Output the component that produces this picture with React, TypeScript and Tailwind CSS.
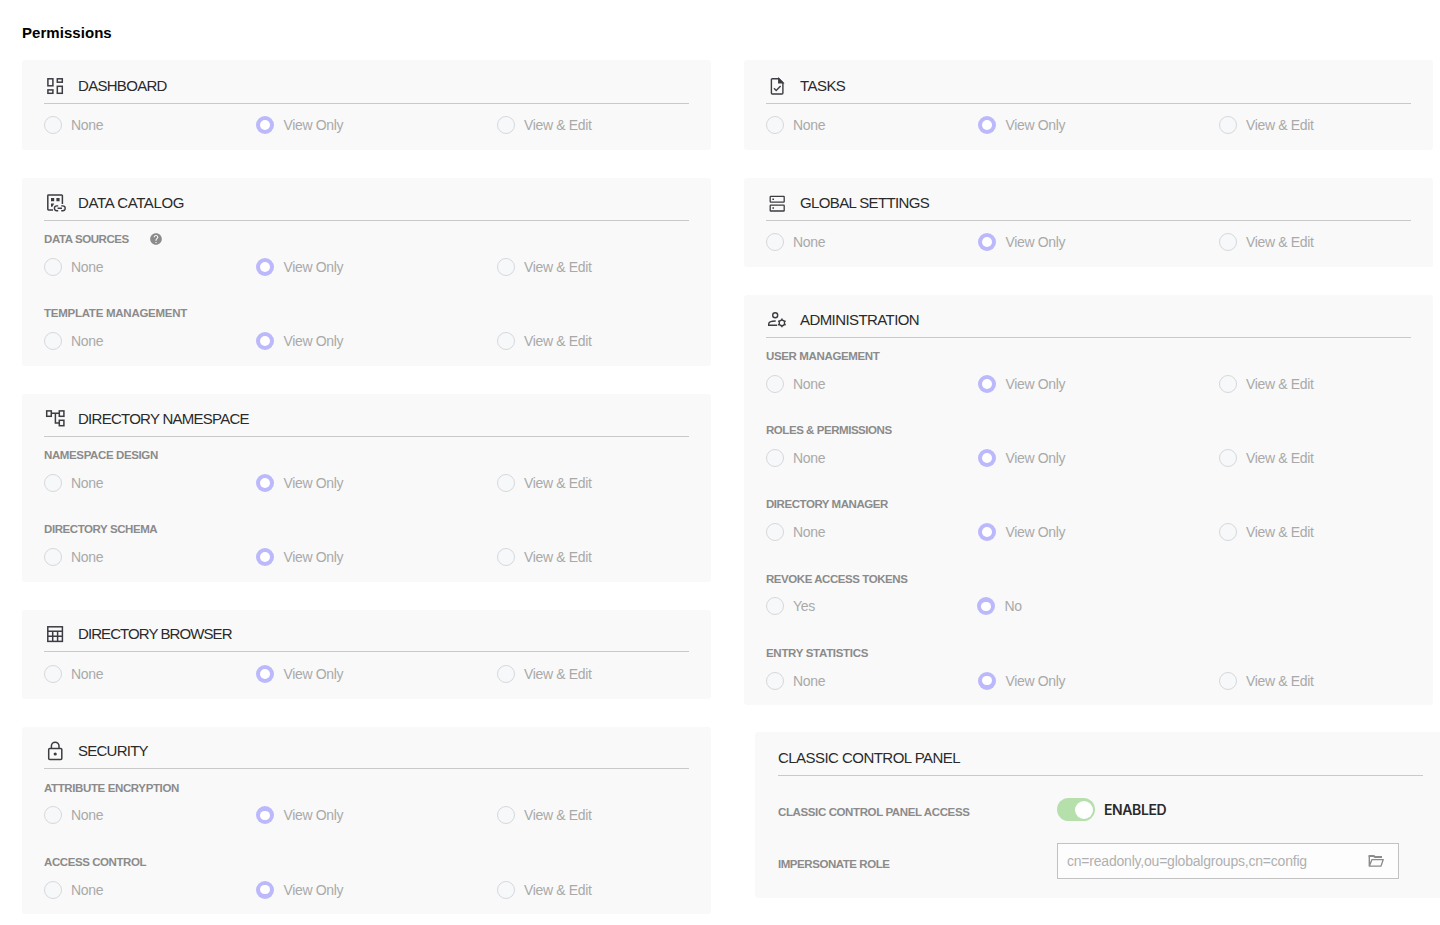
import type { ReactNode } from "react";
import { MdHelp } from "react-icons/md";

function DashboardIcon() {
  return (
    <svg width="22" height="22" viewBox="0 0 22 22" fill="none" stroke="currentColor" strokeWidth="1.5">
      <rect x="3.9" y="3.8" width="5" height="7" />
      <rect x="13.3" y="3.8" width="5" height="3.4" />
      <rect x="3.9" y="14.9" width="5" height="3.4" />
      <rect x="13.3" y="11.3" width="5" height="7" />
    </svg>
  );
}

function CatalogIcon() {
  return (
    <svg width="22" height="22" viewBox="0 0 22 22" fill="none" stroke="currentColor" strokeWidth="1.5">
      <path d="M9 17.9H4.5a.7.7 0 0 1-.7-.7V3.8a.7.7 0 0 1 .7-.7H17.7a.7.7 0 0 1 .7.7V12" />
      <path d="M7 6h3.2v3.2H7ZM12.4 6h3.2v3.2H12.4ZM7 11.6h3.2L8.4 14.8H7Z" fill="currentColor" stroke="none" />
      <path d="M14.2 18.7H12.8a2.4 2.4 0 0 1 0-4.8H14.2M17.2 13.9H18.8a2.4 2.4 0 0 1 0 4.8H17.2M13.6 16.3H18" strokeWidth="1.4" />
    </svg>
  );
}

function TreeIcon() {
  return (
    <svg width="22" height="22" viewBox="0 0 22 22" fill="none" stroke="currentColor" strokeWidth="1.5">
      <rect x="2.7" y="2.9" width="4.6" height="5.4" />
      <rect x="15.3" y="2.9" width="4.6" height="5.4" />
      <rect x="15.3" y="12.3" width="4.6" height="5.4" />
      <path d="M7.3 5.3H15.3M11.4 5.3V15H15.3" />
    </svg>
  );
}

function AdminIcon() {
  return (
    <svg width="22" height="22" viewBox="0 0 22 22" fill="none" stroke="currentColor" strokeWidth="1.4">
      <circle cx="9.2" cy="6.3" r="2.5" />
      <path d="M11.2 16.2H2.7V15C2.7 13.2 6 12 9.7 12" />
      <circle cx="15.9" cy="13.9" r="2.7" strokeWidth="1.3" />
      <path
        d="M15.9 11.2V9.6M15.9 16.6V18.2M18.2 12.6 19.6 11.8M13.6 15.2 12.2 16M18.2 15.2 19.6 16M13.6 12.6 12.2 11.8"
        strokeWidth="1.5"
      />
    </svg>
  );
}

function TaskIcon() {
  return (
    <svg width="22" height="22" viewBox="0 0 22 22" fill="none" stroke="currentColor" strokeWidth="1.4">
      <path d="M6.3 3.7H12.8L16.9 7.8V18.1a.9.9 0 0 1-.9.9H6.3a.9.9 0 0 1-.9-.9V4.6a.9.9 0 0 1 .9-.9Z" />
      <path d="M12.8 3.7V7.8H16.9Z" fill="currentColor" />
      <path d="M8 13.2 10.2 15.4 14.6 11" />
    </svg>
  );
}

function ServerIcon() {
  return (
    <svg width="22" height="22" viewBox="0 0 22 22" fill="none" stroke="currentColor" strokeWidth="1.3">
      <rect x="4.2" y="4.4" width="14" height="5.8" rx="0.6" />
      <rect x="4.2" y="13.2" width="14" height="5.8" rx="0.6" />
      <path d="M6.4 7.3h1.6M6.4 16.1h1.6" strokeWidth="1.5" />
    </svg>
  );
}

function TableIcon() {
  return (
    <svg width="22" height="22" viewBox="0 0 22 22" fill="none" stroke="currentColor" strokeWidth="1.5">
      <rect x="3.8" y="3.8" width="14.6" height="14.6" />
      <path d="M3.8 8.3H18.4M3.8 13.3H18.4M8.7 8.3V18.4M13.6 8.3V18.4" />
    </svg>
  );
}

function LockIcon() {
  return (
    <svg width="22" height="22" viewBox="0 0 22 22" fill="none" stroke="currentColor" strokeWidth="1.5">
      <rect x="4.7" y="8.4" width="13.1" height="11.2" rx="1" />
      <path d="M7.4 8.4V6a3.8 3.8 0 0 1 7.6 0V8.4" />
      <circle cx="11.2" cy="14" r="1.6" fill="currentColor" stroke="none" />
    </svg>
  );
}

function FolderIcon() {
  return (
    <svg width="18" height="14" viewBox="0 0 18 14" fill="none" stroke="currentColor" strokeWidth="1.4">
      <path d="M2.3 12.1H14L16.2 5.6H5L2.3 12.1V1.8" strokeLinejoin="round" />
      <path d="M1.6 1.9H6.6L7.9 2.9H15" strokeWidth="2" />
    </svg>
  );
}

function Radio({ label, checked, className }: { label: string; checked?: boolean; className: string }) {
  return (
    <label className={`flex items-center gap-[9px] ${className}`}>
      {checked ? (
        <span className="flex h-[18px] w-[18px] shrink-0 items-center justify-center rounded-full bg-[#bbb8fb]">
          <span className="h-[9.5px] w-[9.5px] rounded-full bg-white" />
        </span>
      ) : (
        <span className="h-[18px] w-[18px] shrink-0 rounded-full border border-[#d5d8dc] bg-[#f7f8fa]" />
      )}
      <span
        className={`whitespace-nowrap text-[14px] leading-[18px] tracking-[-0.35px] text-[#a9a9a9] ${checked ? "pl-[0.5px]" : ""}`}
      >
        {label}
      </span>
    </label>
  );
}

function Choices({ yesNo }: { yesNo?: boolean }) {
  if (yesNo) {
    return (
      <div className="flex h-[18px]">
        <Radio label="Yes" className="w-[211px]" />
        <Radio label="No" checked className="w-[241px]" />
      </div>
    );
  }
  return (
    <div className="flex h-[18px]">
      <Radio label="None" className="w-[212px]" />
      <Radio label="View Only" checked className="w-[241px]" />
      <Radio label="View & Edit" className="" />
    </div>
  );
}

function Group({
  label,
  labelClass = "tracking-[-0.42px]",
  help,
  yesNo,
}: {
  label: string;
  labelClass?: string;
  help?: boolean;
  yesNo?: boolean;
}) {
  return (
    <div className="h-[74.2px] pt-[10px]">
      <div className="mb-[10.75px] flex h-4 items-center">
        <span className={`text-[11.5px] font-bold leading-4 text-[#8b8b8b] ${labelClass}`}>{label}</span>
        {help && <MdHelp className="ml-[20px] h-[14px] w-[14px] text-[#8b8b8b]" />}
      </div>
      <Choices yesNo={yesNo} />
    </div>
  );
}

function Card({
  title,
  titleClass,
  icon,
  className,
  children,
}: {
  title: string;
  titleClass: string;
  icon?: ReactNode;
  className: string;
  children: ReactNode;
}) {
  return (
    <section className={`rounded-[3px] bg-[#f9f9f9] ${className}`}>
      <header className="flex h-[35px] w-[645px] items-center border-b border-[#c9c9c9] text-[#3c3c42]">
        {icon && <span className="mr-3 h-[22px] w-[22px]">{icon}</span>}
        <h2 className={`whitespace-nowrap text-[15px] leading-5 text-[#2a2a2a] ${titleClass}`}>{title}</h2>
      </header>
      {children}
    </section>
  );
}

export default function App() {
  return (
    <main className="h-[925px] w-[1440px] overflow-hidden bg-white pl-[22px] pt-[22px] font-['Liberation_Sans',Arial,sans-serif]">
      <h1 className="h-[38px] text-[15px] font-bold leading-[22px] tracking-[0.05px] text-black">Permissions</h1>
      <div className="flex gap-[33px]">
        <div className="flex w-[689px] shrink-0 flex-col">
          <Card title="DASHBOARD" titleClass="tracking-[-0.7px]" icon={<DashboardIcon />} className="h-[90px] px-[22px] pt-[9px]">
            <div className="pt-3"><Choices /></div>
          </Card>
          <Card title="DATA CATALOG" titleClass="tracking-[-0.38px]" icon={<CatalogIcon />} className="mt-7 h-[188px] px-[22px] pt-[8px]">
            <Group label="DATA SOURCES" help />
            <Group label="TEMPLATE MANAGEMENT" labelClass="tracking-[-0.26px]" />
          </Card>
          <Card title="DIRECTORY NAMESPACE" titleClass="tracking-[-0.73px]" icon={<TreeIcon />} className="mt-7 h-[188px] px-[22px] pt-[8px]">
            <Group label="NAMESPACE DESIGN" labelClass="tracking-[-0.38px]" />
            <Group label="DIRECTORY SCHEMA" />
          </Card>
          <Card title="DIRECTORY BROWSER" titleClass="tracking-[-0.92px]" icon={<TableIcon />} className="mt-7 h-[89px] px-[22px] pt-[7px]">
            <div className="pt-[13px]"><Choices /></div>
          </Card>
          <Card title="SECURITY" titleClass="tracking-[-0.75px]" icon={<LockIcon />} className="mt-7 h-[187px] px-[22px] pt-[7px]">
            <div className="pt-[0.7px]">
              <Group label="ATTRIBUTE ENCRYPTION" labelClass="tracking-[-0.38px]" />
              <Group label="ACCESS CONTROL" />
            </div>
          </Card>
        </div>
        <div className="flex w-[696px] shrink-0 flex-col">
          <Card title="TASKS" titleClass="tracking-[-0.55px]" icon={<TaskIcon />} className="h-[90px] w-[689px] px-[22px] pt-[9px]">
            <div className="pt-3"><Choices /></div>
          </Card>
          <Card title="GLOBAL SETTINGS" titleClass="tracking-[-0.63px]" icon={<ServerIcon />} className="mt-7 h-[89px] w-[689px] px-[22px] pt-[8px]">
            <div className="pt-3"><Choices /></div>
          </Card>
          <Card title="ADMINISTRATION" titleClass="tracking-[-0.58px]" icon={<AdminIcon />} className="mt-7 h-[410px] w-[689px] px-[22px] pt-[8px]">
            <Group label="USER MANAGEMENT" labelClass="tracking-[-0.36px]" />
            <Group label="ROLES & PERMISSIONS" labelClass="tracking-[-0.45px]" />
            <Group label="DIRECTORY MANAGER" labelClass="tracking-[-0.45px]" />
            <Group label="REVOKE ACCESS TOKENS" labelClass="tracking-[-0.44px]" yesNo />
            <Group label="ENTRY STATISTICS" labelClass="tracking-[-0.3px]" />
          </Card>
          <Card title="CLASSIC CONTROL PANEL" titleClass="tracking-[-0.54px]" className="ml-[11px] mt-[27px] h-[166px] w-[690px] pl-[23px] pt-[9px]">
            <div className="mt-[22px] flex h-[23px] items-center">
              <span className="w-[279px] pt-[4px] text-[11.5px] font-bold leading-4 tracking-[-0.38px] text-[#8b8b8b]">CLASSIC CONTROL PANEL ACCESS</span>
              <span className="flex h-[23px] w-[38px] items-center justify-end rounded-full bg-[#b5e0ac] pr-[2px]">
                <span className="h-[18px] w-[18px] rounded-full bg-white" />
              </span>
              <span className="ml-[9px] font-['Inter',sans-serif] text-[14px] font-semibold leading-5 tracking-[-0.4px] text-[#2a2a2a]">ENABLED</span>
            </div>
            <div className="mt-[22px] flex h-9 items-center">
              <span className="w-[279px] pt-[6px] text-[11.5px] font-bold leading-4 tracking-[-0.45px] text-[#8b8b8b]">IMPERSONATE ROLE</span>
              <div className="flex h-9 w-[342px] items-center justify-between border border-[#c2c2c2] bg-[#fdfdfd] pl-[9px] pr-[13px] text-[#8b8b8b]">
                <span className="text-[14px] leading-5 tracking-[-0.21px] text-[#b0b0b0]">cn=readonly,ou=globalgroups,cn=config</span>
                <FolderIcon />
              </div>
            </div>
          </Card>
        </div>
      </div>
    </main>
  );
}
